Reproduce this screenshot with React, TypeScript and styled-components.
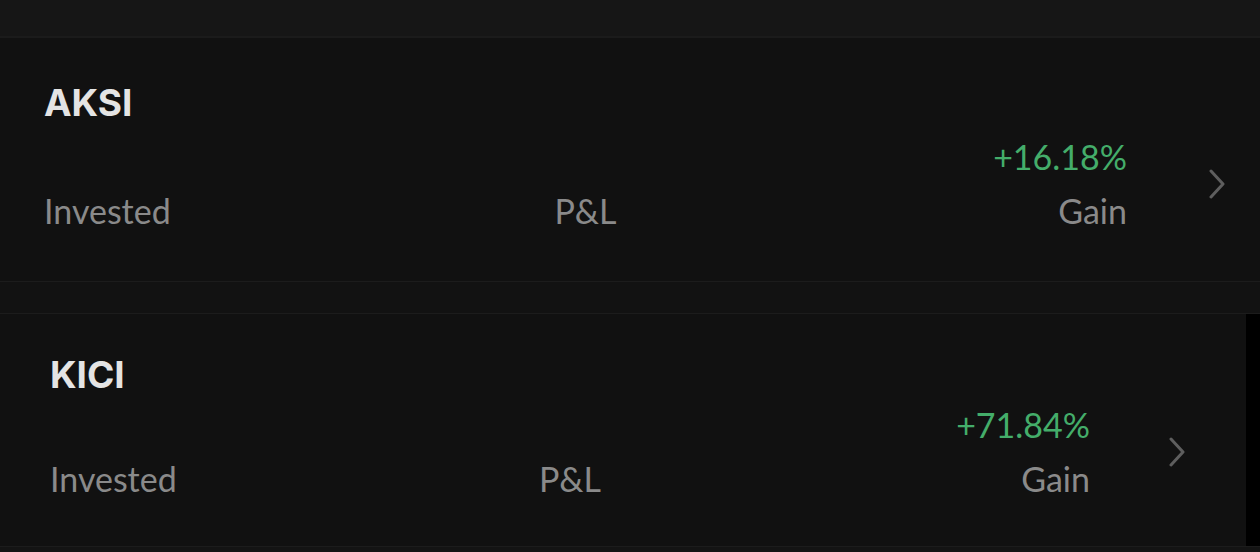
import styled, { createGlobalStyle } from 'styled-components';

type Holding = {
  ticker: string;
  gain: string;
  padTop: number;
  padBottom: number;
  padLeft: number;
  padRight: number;
  nameGap: number;
  chevronGap: number;
};

const holdings: Holding[] = [
  { ticker: 'AKSI', gain: '+16.18%', padTop: 46, padBottom: 53, padLeft: 44, padRight: 34, nameGap: 19, chevronGap: 81 },
  { ticker: 'KICI', gain: '+71.84%', padTop: 42, padBottom: 50, padLeft: 50, padRight: 60, nameGap: 15, chevronGap: 78 },
];

const GlobalStyle = createGlobalStyle`
  html, body {
    margin: 0;
    padding: 0;
    background: #111111;
  }
  body {
    font-family: 'Lato', 'Noto Sans', sans-serif;
  }
`;

function Chevron() {
  return (
    <ChevronIcon width="18" height="30" viewBox="0 0 18 30" fill="none">
      <polyline points="3,2 15,15 3,28" stroke="#5e5e5e" strokeWidth="3" strokeLinecap="round" strokeLinejoin="round" />
    </ChevronIcon>
  );
}

function HoldingCard({ h }: { h: Holding }) {
  return (
    <Card $top={h.padTop} $bottom={h.padBottom} $left={h.padLeft} $right={h.padRight}>
      <Ticker>{h.ticker}</Ticker>
      <Body $gap={h.nameGap} $chevronGap={h.chevronGap}>
        <Values>
          <Cell $align="start">
            <Label>Invested</Label>
          </Cell>
          <Cell $align="center">
            <Label>P&amp;L</Label>
          </Cell>
          <Cell $align="end">
            <Percent>{h.gain}</Percent>
            <Label>Gain</Label>
          </Cell>
        </Values>
        <Chevron />
      </Body>
    </Card>
  );
}

export default function App() {
  return (
    <>
      <GlobalStyle />
      <Page>
        <TopBand />
        <HoldingCard h={holdings[0]} />
        <Spacer />
        <EdgeRow>
          <HoldingCard h={holdings[1]} />
          <BlackEdge />
        </EdgeRow>
        <Bottom />
      </Page>
    </>
  );
}

const Page = styled.div`
  width: 1260px;
  height: 552px;
  overflow: hidden;
  display: flex;
  flex-direction: column;
  background: #111111;
`;

const TopBand = styled.div`
  height: 36px;
  flex-shrink: 0;
  background: #161616;
  border-bottom: 2px solid #1b1b1b;
`;

const Card = styled.div<{ $top: number; $bottom: number; $left: number; $right: number }>`
  flex: 1;
  display: flex;
  flex-direction: column;
  background: #111111;
  padding: ${(p) => p.$top}px ${(p) => p.$right}px ${(p) => p.$bottom}px ${(p) => p.$left}px;
`;

const Ticker = styled.div`
  font-family: 'Inter', 'Lato', sans-serif;
  font-weight: 700;
  font-size: 37px;
  line-height: 1;
  color: #e4e4e4;
`;

const Body = styled.div<{ $gap: number; $chevronGap: number }>`
  display: flex;
  align-items: center;
  gap: ${(p) => p.$chevronGap}px;
  margin-top: ${(p) => p.$gap}px;
`;

const Values = styled.div`
  flex: 1;
  display: grid;
  grid-template-columns: 1fr auto 1fr;
  align-items: end;
`;

const Cell = styled.div<{ $align: 'start' | 'center' | 'end' }>`
  display: flex;
  flex-direction: column;
  align-items: ${(p) => (p.$align === 'start' ? 'flex-start' : p.$align === 'end' ? 'flex-end' : 'center')};
  gap: 20px;
`;

const Label = styled.div`
  font-size: 34px;
  line-height: 1;
  color: #8a8a8a;
`;

const Percent = styled.div`
  font-size: 34px;
  line-height: 1;
  color: #44ad6a;
`;

const ChevronIcon = styled.svg`
  flex-shrink: 0;
  display: block;
`;

const Spacer = styled.div`
  height: 31px;
  flex-shrink: 0;
  background: #121212;
  border-top: 1px solid #1c1c1c;
  border-bottom: 1px solid #1c1c1c;
`;

const EdgeRow = styled.div`
  display: flex;
  flex-shrink: 0;
`;

const BlackEdge = styled.div`
  width: 14px;
  background: #000000;
`;

const Bottom = styled.div`
  flex: 1;
  background: #141414;
  border-top: 1px solid #1c1c1c;
`;
